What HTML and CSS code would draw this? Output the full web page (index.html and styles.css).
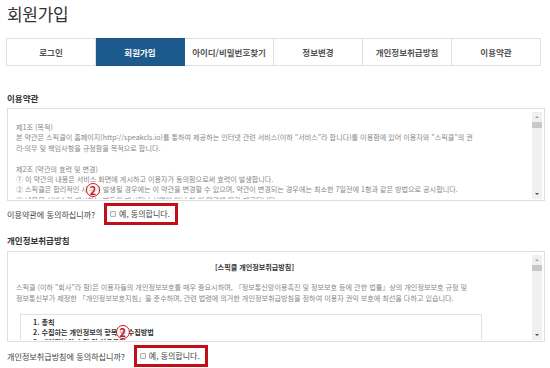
FILE: index.html
```html
<!DOCTYPE html>
<html lang="ko">
<head>
    <meta charset="UTF-8">
    <title>회원가입</title>
    <link rel="stylesheet" href="styles.css">
</head>
<body>
<div class="page">
    <h1 class="page_title">회원가입</h1>
    <ul class="tabs">
        <li>로그인</li>
        <li class="act">회원가입</li>
        <li>아이디/비밀번호찾기</li>
        <li>정보변경</li>
        <li>개인정보취급방침</li>
        <li>이용약관</li>
    </ul>

    <section class="terms terms_use">
        <h2>이용약관</h2>
        <div class="terms_box">
            <div class="terms_text">
                <p>제1조 (목적)<br>
                본 약관은 스픽클이 홈페이지(http://speakcls.io)를 통하여 제공하는 인터넷 관련 서비스(이하 "서비스"라 합니다)를 이용함에 있어 이용자와 "스픽클"의 권<br>
                리·의무 및 책임사항을 규정함을 목적으로 합니다.</p>
                <p>제2조 (약관의 효력 및 변경)<br>
                ① 이 약관의 내용은 서비스 화면에 게시하고 이용자가 동의함으로써 효력이 발생합니다.<br>
                ② 스픽클은 합리적인 사유가 발생될 경우에는 이 약관을 변경할 수 있으며, 약관이 변경되는 경우에는 최소한 7일전에 1항과 같은 방법으로 공시합니다.<br>
                ③ 내용은 서비스가 게시하는 별도의 메시지나 서면이 아닌 한 이 약관에 따라 제공됩니다.</p>
            </div>
            <div class="scrollbar">
                <span class="arrow up"></span>
                <span class="thumb"></span>
                <span class="track"></span>
                <span class="arrow down"></span>
            </div>
        </div>
        <div class="agree">
            <span class="question">이용약관에 동의하십니까?</span>
            <label class="answer">
                <span class="callout">2</span>
                <input type="checkbox" name="agree_use">
                예, 동의합니다.
            </label>
        </div>
    </section>

    <section class="terms terms_privacy">
        <h2>개인정보취급방침</h2>
        <div class="terms_box">
            <div class="terms_text">
                <p class="doc_title">[스픽클 개인정보취급방침]</p>
                <p>스픽클 (이하 "회사"라 함)은 이용자들의 개인정보보호를 매우 중요시하며, 『정보통신망이용촉진 및 정보보호 등에 관한 법률』상의 개인정보보호 규정 및<br>
                정보통신부가 제정한 「개인정보보호지침」을 준수하며, 관련 법령에 의거한 개인정보취급방침을 정하여 이용자 권익 보호에 최선을 다하고 있습니다.</p>
                <ol class="toc">
                    <li>1. 총칙</li>
                    <li>2. 수집하는 개인정보의 항목 및 수집방법</li>
                    <li>3. 개인정보의 수집 및 이용목적</li>
                </ol>
            </div>
            <div class="scrollbar">
                <span class="arrow up"></span>
                <span class="thumb"></span>
                <span class="track"></span>
                <span class="arrow down"></span>
            </div>
        </div>
        <div class="agree">
            <span class="question">개인정보취급방침에 동의하십니까?</span>
            <label class="answer">
                <span class="callout">2</span>
                <input type="checkbox" name="agree_privacy">
                예, 동의합니다.
            </label>
        </div>
    </section>
</div>
</body>
</html>
```

FILE: styles.css
```css
body {
    margin: 0;
    padding: 0;
    background: #fff;
    color: #333;
    font-family: "Noto Sans CJK KR", "Noto Sans", sans-serif;
}
.page {
    padding: 0 5px 0 7px;
}
.page_title {
    margin: 3px 0 0;
    font-size: 17px;
    line-height: 22px;
    font-weight: normal;
    color: #333;
    letter-spacing: -0.3px;
}

/* tabs */
.tabs {
    display: flex;
    margin: 13px 4px 0 -1px;
    padding: 0;
    list-style: none;
}
.tabs li {
    flex: 1;
    height: 26px;
    line-height: 26px;
    border: 1px solid #dedede;
    border-left: none;
    text-align: center;
    font-size: 8.5px;
    font-weight: bold;
    color: #555;
}
.tabs li:first-child {
    border-left: 1px solid #dedede;
}
.tabs li.act {
    background-color: #1c5a8e;
    border-color: #1c5a8e;
    color: #fff;
}

/* terms blocks */
.terms h2 {
    margin: 0 0 4px;
    font-size: 8.5px;
    line-height: 12px;
    font-weight: bold;
    color: #333;
}
.terms_use {
    margin-top: 26px;
}
.terms_privacy {
    margin-top: 9px;
}
.terms_privacy h2 {
    margin-bottom: 5px;
}
.terms_box {
    display: flex;
    height: 87px;
    padding: 3px 2px 1px 3px;
    border: 1px solid #dedede;
}
.terms_text {
    flex: 1;
    overflow: hidden;
    padding: 10px 39px 0 5px;
    font-size: 7.1px;
    line-height: 10.4px;
    color: #888;
    white-space: nowrap;
}
.terms_text p {
    margin: 0 0 10.4px;
}
.terms_privacy .terms_text {
    padding-top: 7px;
}
.terms_privacy .terms_box {
    height: 85px;
}
.doc_title {
    text-align: center;
    font-weight: bold;
    color: #333;
}
.terms_text p.doc_title {
    margin-bottom: 10px;
}
.toc {
    margin: 11px 11px 0 4px;
    padding: 2px 12px 0;
    border: 1px solid #e2e2e2;
    list-style: none;
    font-weight: bold;
    color: #333;
    line-height: 10px;
}

/* fake scrollbar */
.scrollbar {
    display: flex;
    flex-direction: column;
    width: 10px;
    background: #f0f0f0;
}
.arrow {
    display: block;
    height: 10px;
    position: relative;
}
.arrow::after {
    content: "";
    position: absolute;
    left: 3px;
    border-left: 2px solid transparent;
    border-right: 2px solid transparent;
}
.arrow.up::after {
    top: 4px;
    border-bottom: 2px solid #a3a3a3;
}
.arrow.down::after {
    top: 4px;
    border-top: 2px solid #505050;
}
.thumb {
    display: block;
    height: 6px;
    background: #c8c8c8;
}
.track {
    flex: 1;
}

/* agree row */
.agree {
    display: flex;
    align-items: center;
    gap: 9px;
    margin-top: 2px;
    font-size: 8.1px;
    color: #444;
}
.terms_privacy .agree {
    margin-top: 3px;
}
.answer {
    position: relative;
    display: flex;
    align-items: center;
    gap: 3px;
    height: 16px;
    padding: 0 5px 0 3px;
    border: 3px solid #c20e1a;
    font-size: 8px;
    line-height: 16px;
}
.answer input {
    appearance: none;
    width: 6px;
    height: 6px;
    margin: 0;
    border: 1px solid #b0b0b0;
    border-radius: 1px;
    background: #f4f4f4;
}
.callout {
    position: absolute;
    left: -21px;
    top: -23px;
    width: 12px;
    height: 12px;
    border: 1.5px solid #d0141e;
    border-radius: 50%;
    background: rgba(255, 255, 255, 0.6);
    color: #d0141e;
    font-size: 11px;
    font-weight: bold;
    line-height: 12px;
    text-align: center;
}
```
